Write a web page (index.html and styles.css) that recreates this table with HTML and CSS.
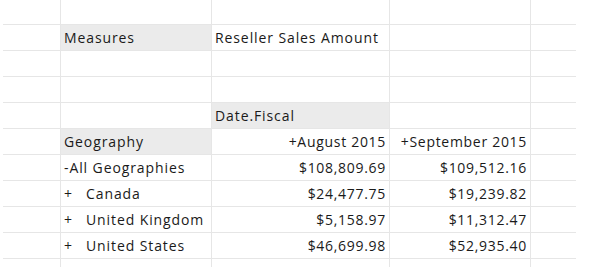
FILE: index.html
```html
<!DOCTYPE html>
<html lang="en">
<head>
<meta charset="utf-8">
<title>Pivot</title>
<link rel="stylesheet" href="styles.css">
</head>
<body>
<div class="sheet">
  <div class="c"></div><div class="c"></div><div class="c"></div><div class="c"></div><div class="c last"></div>

  <div class="c"></div><div class="c hd">Measures</div><div class="c">Reseller Sales Amount</div><div class="c"></div><div class="c last"></div>

  <div class="c"></div><div class="c"></div><div class="c"></div><div class="c"></div><div class="c last"></div>

  <div class="c"></div><div class="c"></div><div class="c"></div><div class="c"></div><div class="c last"></div>

  <div class="c"></div><div class="c"></div><div class="c hd">Date.Fiscal</div><div class="c"></div><div class="c last"></div>

  <div class="c"></div><div class="c hd">Geography</div><div class="c num">+August 2015</div><div class="c num">+September 2015</div><div class="c last"></div>

  <div class="c"></div><div class="c">-All Geographies</div><div class="c num">$108,809.69</div><div class="c num">$109,512.16</div><div class="c last"></div>

  <div class="c"></div><div class="c"><span class="exp">+</span>Canada</div><div class="c num">$24,477.75</div><div class="c num">$19,239.82</div><div class="c last"></div>

  <div class="c"></div><div class="c"><span class="exp">+</span>United Kingdom</div><div class="c num">$5,158.97</div><div class="c num">$11,312.47</div><div class="c last"></div>

  <div class="c"></div><div class="c"><span class="exp">+</span>United States</div><div class="c num">$46,699.98</div><div class="c num">$52,935.40</div><div class="c last"></div>

  <div class="c"></div><div class="c"></div><div class="c"></div><div class="c"></div><div class="c last"></div>
</div>
</body>
</html>
```
FILE: styles.css
```css
html, body {
  margin: 0;
  padding: 0;
  background: #ffffff;
  overflow: hidden;
}
body {
  padding-left: 3px;
  font-family: "Open Sans", "Liberation Sans", sans-serif;
  font-size: 14px;
  font-weight: 500;
  color: #1a1a1a;
}
.sheet {
  display: grid;
  grid-template-columns: 58px 151px 178px 141px 45px;
  grid-template-rows: 25px;
  grid-auto-rows: 26px;
  height: 267px;
  overflow: hidden;
}
.c {
  box-sizing: border-box;
  border-right: 1px solid #e6e6e6;
  border-bottom: 1px solid #e6e6e6;
  padding: 3px 3px 3px 3px;
  line-height: 19px;
  letter-spacing: 0.9px;
  white-space: nowrap;
  overflow: hidden;
}
.c.last {
  border-right: none;
}
.hd {
  background: #ebebeb;
}
.num {
  text-align: right;
  letter-spacing: 0.7px;
}
.exp {
  display: inline-block;
  width: 22px;
}
```
